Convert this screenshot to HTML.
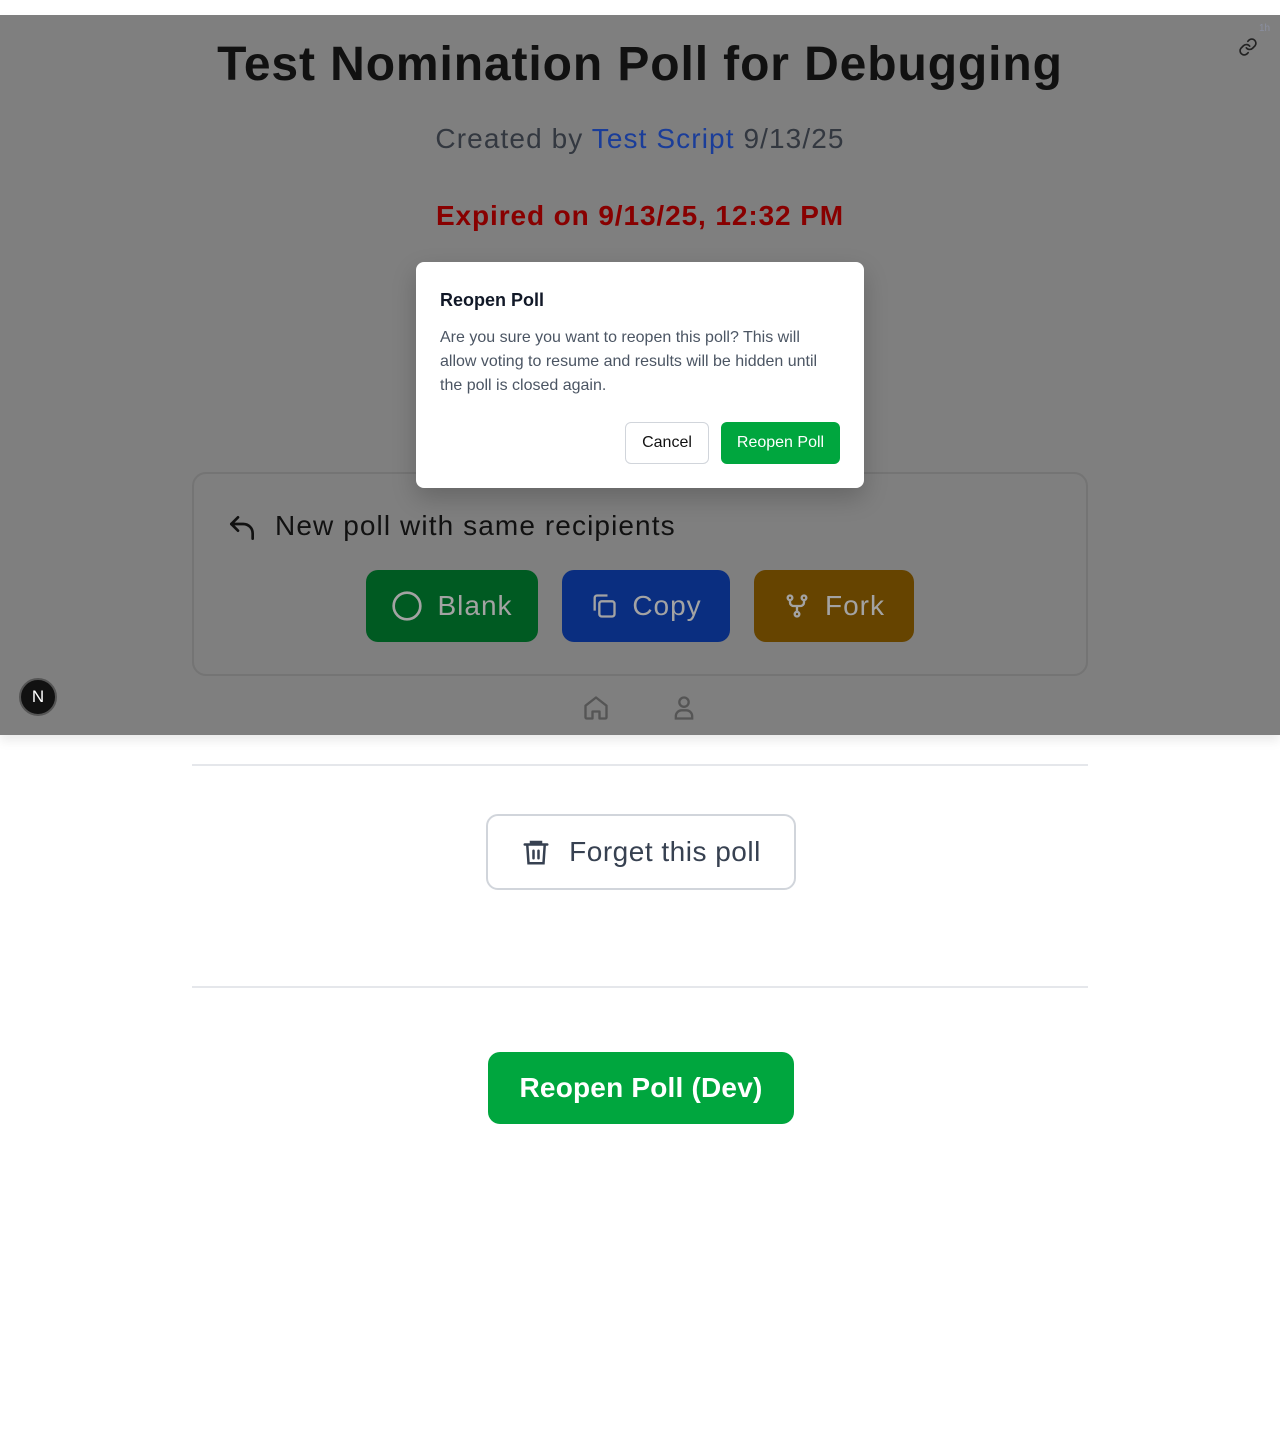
<!DOCTYPE html>
<html><head><meta charset="utf-8"><style>
*{box-sizing:border-box;margin:0;padding:0}
body{width:1280px;height:1440px;background:#fff;font-family:"Liberation Sans",sans-serif;position:relative;overflow:hidden}
.ov{position:absolute;left:0;top:15px;width:1280px;height:720px;background:#7f7f7f;box-shadow:0 6px 10px rgba(0,0,0,0.08)}
.abs{position:absolute}
.c{left:0;width:1280px;text-align:center}
.btn{position:absolute;top:570px;height:72px;border-radius:12px;display:flex;align-items:center;justify-content:center;gap:14px;color:#a3a3a3;font-size:28px;letter-spacing:1px}
</style></head><body>
<div class="ov">
  <div class="abs c" style="top:22px;font-size:48px;font-weight:bold;color:#111;letter-spacing:0.9px">Test Nomination Poll for Debugging</div>
  <div class="abs c" style="top:108px;font-size:28px;color:#333840;letter-spacing:1.1px">Created by <span style="color:#1a3d99">Test Script</span> 9/13/25</div>
  <div class="abs c" style="top:185px;font-size:28px;font-weight:bold;color:#880000;letter-spacing:0.9px">Expired on 9/13/25, 12:32 PM</div>
  <div class="abs" style="left:1259px;top:8px;font-size:10px;color:#8a8fa0">1h</div>
  <svg class="abs" style="left:1238px;top:22px" width="20" height="20" viewBox="0 0 24 24" fill="none" stroke="#222" stroke-width="2" stroke-linecap="round"><path d="M10 13a5 5 0 0 0 7.5.5l3-3a5 5 0 0 0-7-7l-1.7 1.7"/><path d="M14 11a5 5 0 0 0-7.5-.5l-3 3a5 5 0 0 0 7 7l1.7-1.7"/></svg>
  <div class="abs" style="left:192px;top:457px;width:896px;height:204px;border:2px solid #747474;border-radius:14px"></div>
  <svg class="abs" style="left:226px;top:497px" width="32" height="32" viewBox="0 0 24 24" fill="none" stroke="#111" stroke-width="2" stroke-linecap="round" stroke-linejoin="round"><path d="M9 14L4 9l5-5"/><path d="M4 9h9a7 7 0 0 1 7 7v4"/></svg>
  <div class="abs" style="left:275px;top:495px;font-size:28px;color:#111;letter-spacing:1.1px">New poll with same recipients</div>
  <div class="btn" style="left:366px;top:555px;width:172px;background:#005a22"><svg width="32" height="32" viewBox="0 0 24 24" fill="none" stroke="#a3a3a3" stroke-width="2"><circle cx="12" cy="12" r="10"/></svg>Blank</div>
  <div class="btn" style="left:562px;top:555px;width:168px;background:#0a2e80"><svg width="28" height="28" viewBox="0 0 24 24" fill="none" stroke="#a3a3a3" stroke-width="2"><rect x="8" y="8" width="13" height="13" rx="2"/><path d="M4 16V5a2 2 0 0 1 2-2h9"/></svg>Copy</div>
  <div class="btn" style="left:754px;top:555px;width:160px;background:#664400"><svg width="28" height="28" viewBox="0 0 24 24" fill="none" stroke="#a3a3a3" stroke-width="2"><circle cx="6" cy="5" r="2"/><circle cx="18" cy="5" r="2"/><circle cx="12" cy="19" r="2"/><path d="M6 7v2a3 3 0 0 0 3 3h6a3 3 0 0 0 3-3V7M12 12v5"/></svg>Fork</div>
  <svg class="abs" style="left:582px;top:679px" width="28" height="28" viewBox="0 0 24 24" fill="none" stroke="#555" stroke-width="2" stroke-linejoin="round"><path d="M3 10l9-7 9 7v10a1 1 0 0 1-1 1h-5v-6h-6v6H4a1 1 0 0 1-1-1z"/></svg>
  <svg class="abs" style="left:670px;top:679px" width="28" height="28" viewBox="0 0 24 24" fill="none" stroke="#555" stroke-width="2"><circle cx="12" cy="7" r="4"/><path d="M5 21v-2a5 5 0 0 1 5-5h4a5 5 0 0 1 5 5v2z"/></svg>
  <div class="abs" style="left:19px;top:663px;width:38px;height:38px;border-radius:50%;background:#111;border:2px solid #555;color:#fff;font-size:17px;display:flex;align-items:center;justify-content:center">N</div>
</div>
<div class="abs" style="left:416px;top:262px;width:448px;height:226px;background:#fff;border-radius:8px;box-shadow:0 10px 25px rgba(0,0,0,0.2)">
  <div class="abs" style="left:24px;top:28px;font-size:18px;font-weight:bold;color:#111827">Reopen Poll</div>
  <div class="abs" style="left:24px;top:64px;width:400px;font-size:16px;line-height:24px;color:#4b5563">Are you sure you want to reopen this poll? This will allow voting to resume and results will be hidden until the poll is closed again.</div>
  <div class="abs" style="left:209px;top:160px;width:84px;height:42px;border:1px solid #d1d5db;border-radius:6px;font-size:16px;color:#111;display:flex;align-items:center;justify-content:center">Cancel</div>
  <div class="abs" style="left:305px;top:160px;width:119px;height:42px;background:#00a63e;border-radius:6px;font-size:16px;color:#fff;display:flex;align-items:center;justify-content:center">Reopen Poll</div>
</div>
<div class="abs" style="left:192px;top:764px;width:896px;height:2px;background:#e5e7eb"></div>
<div class="abs" style="left:486px;top:814px;width:310px;height:76px;border:2px solid #d1d5db;border-radius:12px;display:flex;align-items:center;justify-content:center;gap:18px;font-size:28px;color:#374151;letter-spacing:0.5px"><svg width="30" height="30" viewBox="0 0 24 24" fill="none" stroke="#374151" stroke-width="2" stroke-linecap="round"><path d="M3 6h18M8 6V4h8v2M5 6l1 15h12l1-15M10 11v6M14 11v6"/></svg>Forget this poll</div>
<div class="abs" style="left:192px;top:986px;width:896px;height:2px;background:#e5e7eb"></div>
<div class="abs" style="left:488px;top:1052px;width:306px;height:72px;background:#00a63e;border-radius:12px;color:#fff;font-size:28px;font-weight:bold;display:flex;align-items:center;justify-content:center;letter-spacing:0.2px">Reopen Poll (Dev)</div>
</body></html>
